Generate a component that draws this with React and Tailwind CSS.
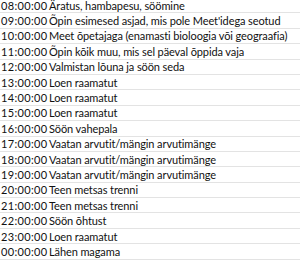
import React from "react";

const rows = [
  ["08:00:00", "Äratus, hambapesu, söömine"],
  ["09:00:00", "Õpin esimesed asjad, mis pole Meet'idega seotud"],
  ["10:00:00", "Meet õpetajaga (enamasti bioloogia või geograafia)"],
  ["11:00:00", "Õpin kõik muu, mis sel päeval õppida vaja"],
  ["12:00:00", "Valmistan lõuna ja söön seda"],
  ["13:00:00", "Loen raamatut"],
  ["14:00:00", "Loen raamatut"],
  ["15:00:00", "Loen raamatut"],
  ["16:00:00", "Söön vahepala"],
  ["17:00:00", "Vaatan arvutit/mängin arvutimänge"],
  ["18:00:00", "Vaatan arvutit/mängin arvutimänge"],
  ["19:00:00", "Vaatan arvutit/mängin arvutimänge"],
  ["20:00:00", "Teen metsas trenni"],
  ["21:00:00", "Teen metsas trenni"],
  ["22:00:00", "Söön õhtust"],
  ["23:00:00", "Loen raamatut"],
  ["00:00:00", "Lähen magama"],
];

export default function App() {
  return (
    <div className="w-[300px] h-[262px] overflow-hidden bg-white text-[#111] font-['Lato',sans-serif] text-[11px]">
      <div className="-mt-[2px]">
        {rows.map(([t, d], i) => (
          <div key={i} className="flex h-[15.4px] items-center border-b border-[#e3e3e3] leading-none">
            <div className="w-[49px] pl-[1px] whitespace-nowrap tracking-[0.35px]">{t}</div>
            <div className="whitespace-nowrap tracking-[-0.1px]">{d}</div>
          </div>
        ))}
      </div>
    </div>
  );
}
